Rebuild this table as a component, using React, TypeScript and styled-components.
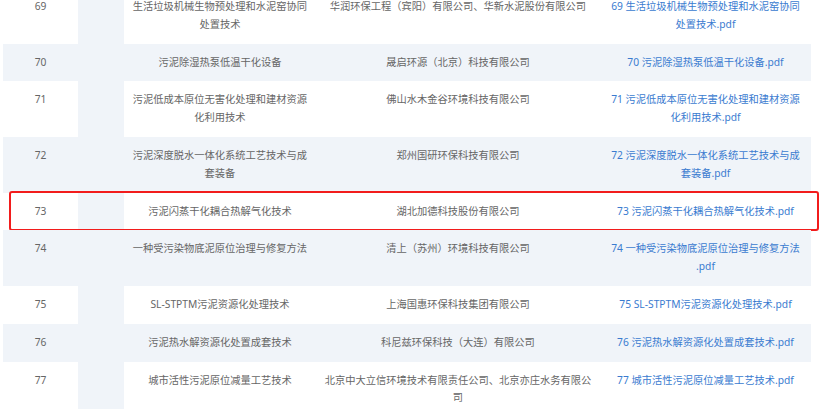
import styled, { createGlobalStyle, css } from "styled-components";

const GlobalStyle = createGlobalStyle`
  html, body {
    margin: 0;
    padding: 0;
    background: #fff;
    overflow: hidden;
  }
  body {
    font-family: "Noto Sans", "Noto Sans CJK SC", sans-serif;
  }
`;

const StyledPage = styled.div`
  width: 831px;
  height: 409px;
  overflow: hidden;
  background: #fff;
`;

const StyledTable = styled.div`
  display: flex;
  flex-direction: column;
  width: 808px;
  margin: -12px 0 0 3px;
`;

const StyledRow = styled.div<{ $striped: boolean; $highlight: boolean }>`
  position: relative;
  display: grid;
  grid-template-columns: 75px 46px 192px 284px 211px;
  background: ${({ $striped }) => ($striped ? "#f0f4f9" : "#fff")};
  font-size: 10.25px;
  line-height: 17.8px;

  ${({ $highlight }) =>
    $highlight &&
    css`
      &::after {
        content: "";
        position: absolute;
        left: 6px;
        right: -8px;
        top: -2px;
        bottom: -1px;
        border: 2px solid #f21c1c;
        border-radius: 3px;
        pointer-events: none;
      }
    `}
`;

const StyledCell = styled.div<{ $pad: number; $link?: boolean }>`
  padding: 10px ${({ $pad }) => $pad}px;
  text-align: center;
  color: ${({ $link }) => ($link ? "#3a7bd0" : "#666")};
`;

const StyledExt = styled.span`
  white-space: nowrap;
`;

const StyledSpacer = styled.div`
  background: #f0f4f9;
`;

interface Item {
  no: number;
  name: string;
  company: string;
}

const items: Item[] = [
  {
    no: 69,
    name: "生活垃圾机械生物预处理和水泥窑协同处置技术",
    company: "华润环保工程（宾阳）有限公司、华新水泥股份有限公司",
  },
  { no: 70, name: "污泥除湿热泵低温干化设备", company: "晟启环源（北京）科技有限公司" },
  {
    no: 71,
    name: "污泥低成本原位无害化处理和建材资源化利用技术",
    company: "佛山水木金谷环境科技有限公司",
  },
  {
    no: 72,
    name: "污泥深度脱水一体化系统工艺技术与成套装备",
    company: "郑州国研环保科技有限公司",
  },
  { no: 73, name: "污泥闪蒸干化耦合热解气化技术", company: "湖北加德科技股份有限公司" },
  {
    no: 74,
    name: "一种受污染物底泥原位治理与修复方法",
    company: "清上（苏州）环境科技有限公司",
  },
  { no: 75, name: "SL-STPTM污泥资源化处理技术", company: "上海国惠环保科技集团有限公司" },
  { no: 76, name: "污泥热水解资源化处置成套技术", company: "科尼兹环保科技（大连）有限公司" },
  {
    no: 77,
    name: "城市活性污泥原位减量工艺技术",
    company: "北京中大立信环境技术有限责任公司、北京亦庄水务有限公司",
  },
];

const App = () => (
  <StyledPage>
    <GlobalStyle />
    <StyledTable>
      {items.map((item, i) => (
        <StyledRow key={item.no} $striped={i % 2 === 1} $highlight={item.no === 73}>
          <StyledCell $pad={4}>{item.no}</StyledCell>
          <StyledSpacer />
          <StyledCell $pad={8}>{item.name}</StyledCell>
          <StyledCell $pad={6}>{item.company}</StyledCell>
          <StyledCell $pad={8} $link>
            {item.no} {item.name}
            <wbr />
            <StyledExt>.pdf</StyledExt>
          </StyledCell>
        </StyledRow>
      ))}
    </StyledTable>
  </StyledPage>
);

export default App;
